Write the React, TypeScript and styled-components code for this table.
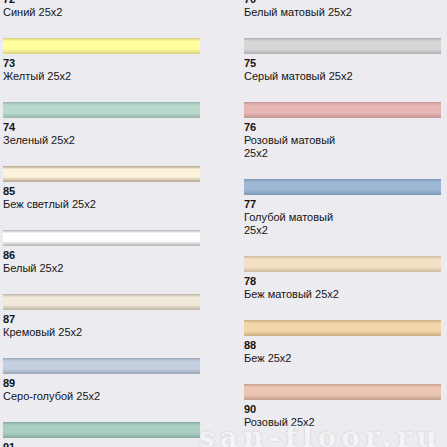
import React from 'react'
import styled, { createGlobalStyle } from 'styled-components'

interface Trim {
    num: string
    name: string
    center: string
    edge: string
}

const leftTrims: Trim[] = [
    { num: '72', name: 'Синий 25x2', center: '#9fb6d4', edge: '#7f96b4' },
    { num: '73', name: 'Желтый 25x2', center: '#ffff9e', edge: '#d8d07c' },
    { num: '74', name: 'Зеленый 25x2', center: '#b9d9cc', edge: '#97b6a9' },
    { num: '85', name: 'Беж светлый 25x2', center: '#fdf3da', edge: '#b3a48e' },
    { num: '86', name: 'Белый 25x2', center: '#ffffff', edge: '#b4b4b6' },
    { num: '87', name: 'Кремовый 25x2', center: '#f0e9da', edge: '#bdb5a5' },
    { num: '89', name: 'Серо-голубой 25x2', center: '#c4d0e0', edge: '#9aa6b6' },
    { num: '91', name: 'Зеленый 25x2', center: '#aacec2', edge: '#88ab9f' },
]

const rightTrims: Trim[] = [
    { num: '70', name: 'Белый матовый 25x2', center: '#f4f4f4', edge: '#c4c4c4' },
    { num: '75', name: 'Серый матовый 25x2', center: '#d7d7d8', edge: '#b0b0b2' },
    { num: '76', name: 'Розовый матовый 25x2', center: '#e8b7b5', edge: '#c39793' },
    { num: '77', name: 'Голубой матовый 25x2', center: '#9eb7d4', edge: '#7e97b4' },
    { num: '78', name: 'Беж матовый 25x2', center: '#f4e0c4', edge: '#cdb99e' },
    { num: '88', name: 'Беж 25x2', center: '#f3d6a9', edge: '#c9ae86' },
    { num: '90', name: 'Розовый 25x2', center: '#ebc7b3', edge: '#c3a08e' },
]

const GlobalStyle = createGlobalStyle`
    body {
        margin: 0;
        background: #ecebf0;
        font-family: "Liberation Sans", Arial, sans-serif;
        color: #141414;
    }
`

const Page = styled.div`
    position: relative;
    height: 447px;
    overflow: hidden;
    display: flex;
    gap: 44px;
    padding-left: 3px;
`

const Column = styled.div`
    width: 197px;
    display: flex;
    flex-direction: column;
    margin-top: -26px;
`

const Item = styled.div`
    margin-bottom: 19px;
`

const Bar = styled.div<{ center: string; edge: string }>`
    height: 16px;
    background: linear-gradient(
        to bottom,
        ${({ edge }) => edge} 0%,
        ${({ center }) => center} 20%,
        ${({ center }) => center} 68%,
        ${({ edge }) => edge} 100%
    );
`

const Caption = styled.div`
    width: 110px;
    padding-top: 3px;
    font-size: 11px;
    line-height: 13px;
`

const Num = styled.div`
    font-weight: bold;
`

// faint site stamp over the bottom right corner
const Watermark = styled.div`
    position: absolute;
    left: 199px;
    top: 424px;
    font-family: "DejaVu Serif", "Liberation Serif", serif;
    font-weight: bold;
    font-size: 28px;
    line-height: 28px;
    letter-spacing: 5px;
    color: #f4f4f7;
    text-shadow: 0 0 2px #c4c4ca;
    white-space: nowrap;
    pointer-events: none;
`

const TrimItem: React.FC<{ trim: Trim }> = ({ trim }) => (
    <Item>
        <Bar center={trim.center} edge={trim.edge} />
        <Caption>
            <Num>{trim.num}</Num>
            {trim.name}
        </Caption>
    </Item>
)

const App: React.FC = () => {
    return (
        <>
            <GlobalStyle />
            <Page>
                <Column>
                    {leftTrims.map((t) => <TrimItem key={t.num + t.name} trim={t} />)}
                </Column>
                <Column>
                    {rightTrims.map((t) => <TrimItem key={t.num} trim={t} />)}
                </Column>
                <Watermark>san-floor.ru</Watermark>
            </Page>
        </>
    )
}

export default App
